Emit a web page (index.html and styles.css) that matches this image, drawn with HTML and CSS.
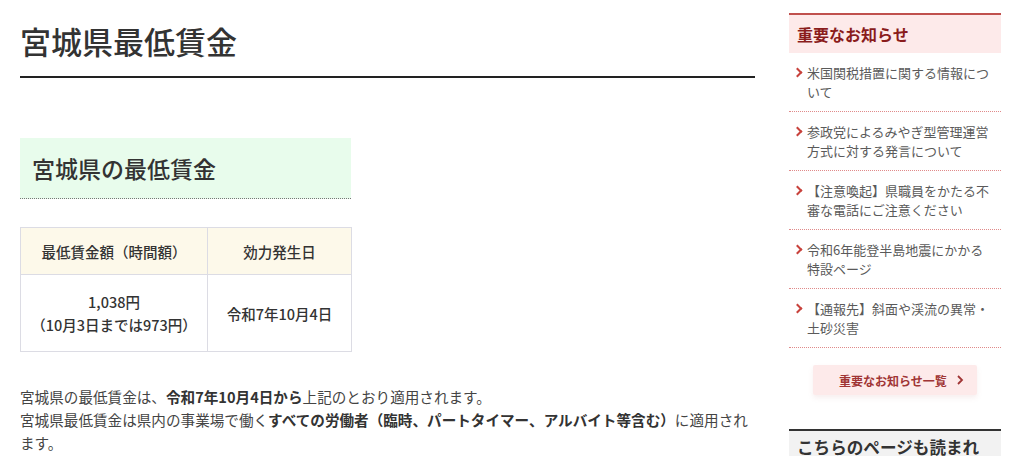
FILE: index.html
```html
<!DOCTYPE html>
<html lang="ja">
<head>
    <meta charset="UTF-8">
    <meta name="viewport" content="width=device-width, initial-scale=1.0">
    <title>宮城県最低賃金</title>
    <link rel="stylesheet" href="styles.css">
</head>
<body>
    <div class="page">
        <main class="main">
            <h1 class="page-title">宮城県最低賃金</h1>

            <h2 class="section-title">宮城県の最低賃金</h2>

            <table class="wage-table">
                <thead>
                    <tr>
                        <th class="col-wage">最低賃金額（時間額）</th>
                        <th>効力発生日</th>
                    </tr>
                </thead>
                <tbody>
                    <tr>
                        <td>1,038円<br>（10月3日までは973円）</td>
                        <td>令和7年10月4日</td>
                    </tr>
                </tbody>
            </table>

            <p class="body-text">
                宮城県の最低賃金は、<strong>令和7年10月4日から</strong>上記のとおり適用されます。<br>
                宮城県最低賃金は県内の事業場で働く<strong>すべての労働者（臨時、パートタイマー、アルバイト等含む）</strong>に適用されます。
            </p>
        </main>

        <aside class="sidebar">
            <section class="notice">
                <h2 class="notice-title">重要なお知らせ</h2>
                <ul class="notice-list">
                    <li><a href="#">米国関税措置に関する情報について</a></li>
                    <li><a href="#">参政党によるみやぎ型管理運営方式に対する発言について</a></li>
                    <li><a href="#">【注意喚起】県職員をかたる不審な電話にご注意ください</a></li>
                    <li><a href="#">令和6年能登半島地震にかかる特設ページ</a></li>
                    <li><a href="#">【通報先】斜面や渓流の異常・土砂災害</a></li>
                </ul>
                <div class="notice-more">
                    <a href="#" class="more-btn">重要なお知らせ一覧
                        <svg width="10" height="12" viewBox="0 0 10 12"><polyline points="3,2 7,6 3,10" fill="none" stroke="currentColor" stroke-width="1.8"/></svg>
                    </a>
                </div>
            </section>

            <section class="related">
                <h2 class="related-title">こちらのページも読まれています</h2>
            </section>
        </aside>
    </div>
</body>
</html>
```

FILE: styles.css
```css
body {
    margin: 0;
    font-family: "Noto Sans CJK JP", "Noto Sans", sans-serif;
    color: #333;
    background: #fff;
}

.page {
    display: flex;
    gap: 34px;
    padding: 0 20px;
    height: 456px;
    overflow: hidden;
}

.main {
    width: 735px;
    flex-shrink: 0;
}

.page-title {
    margin: 19px 0 0;
    padding-bottom: 14px;
    font-size: 31px;
    line-height: 43px;
    font-weight: 500;
    color: #333;
    border-bottom: 2px solid #222;
}

.section-title {
    width: 331px;
    box-sizing: border-box;
    margin: 60px 0 0;
    padding: 0 12px;
    height: 61px;
    line-height: 60px;
    font-size: 23px;
    font-weight: 500;
    color: #333;
    background: #e8fcec;
    border-bottom: 1px dotted #777;
}

.wage-table {
    margin-top: 28px;
    width: 332px;
    border-collapse: collapse;
    font-size: 14.5px;
}

.wage-table th,
.wage-table td {
    border: 1px solid #dcdce4;
    text-align: center;
    color: #333;
    padding: 0;
}

.wage-table th {
    height: 46px;
    background: #fdf9ea;
    font-weight: 500;
}

.wage-table .col-wage {
    width: 186px;
}

.wage-table td {
    height: 76px;
    font-weight: 500;
    line-height: 23px;
}

.body-text {
    margin: 33px 0 0;
    font-size: 14.6px;
    line-height: 23px;
    color: #444;
}

.body-text strong {
    color: #333;
}

.sidebar {
    width: 212px;
    flex-shrink: 0;
    padding-top: 13px;
}

.notice-title {
    margin: 0;
    border-top: 2px solid #c0504d;
    background: #fdeaea;
    height: 38px;
    line-height: 38px;
    padding-left: 8px;
    font-size: 16px;
    font-weight: 700;
    color: #8a1c1c;
}

.notice-list {
    list-style: none;
    margin: 0;
    padding: 0;
}

.notice-list li {
    border-bottom: 1px dotted #e08a8a;
    padding: 10px 9px 10px 18px;
    position: relative;
}

.notice-list li::before {
    content: '';
    position: absolute;
    left: 5px;
    top: 16px;
    width: 5px;
    height: 5px;
    border-top: 2px solid #c8423c;
    border-right: 2px solid #c8423c;
    transform: rotate(45deg);
}

.notice-list a {
    display: block;
    font-size: 13px;
    line-height: 19px;
    color: #5a5a5a;
    text-decoration: none;
}

.notice-more {
    display: flex;
    justify-content: center;
    padding-top: 17px;
}

.more-btn {
    display: flex;
    align-items: center;
    justify-content: center;
    gap: 8px;
    width: 164px;
    height: 30px;
    padding-left: 14px;
    box-sizing: border-box;
    background: #fdeaea;
    border-radius: 2px;
    box-shadow: 0 3px 5px rgba(200, 150, 150, 0.15);
    font-size: 12px;
    font-weight: 700;
    color: #a03434;
    text-decoration: none;
}

.related {
    margin-top: 34px;
}

.related-title {
    margin: 0;
    border-top: 2px solid #333;
    background: #f2f2f2;
    padding: 3px 8px;
    font-size: 16.6px;
    line-height: 26px;
    font-weight: 700;
    color: #333;
}
```
